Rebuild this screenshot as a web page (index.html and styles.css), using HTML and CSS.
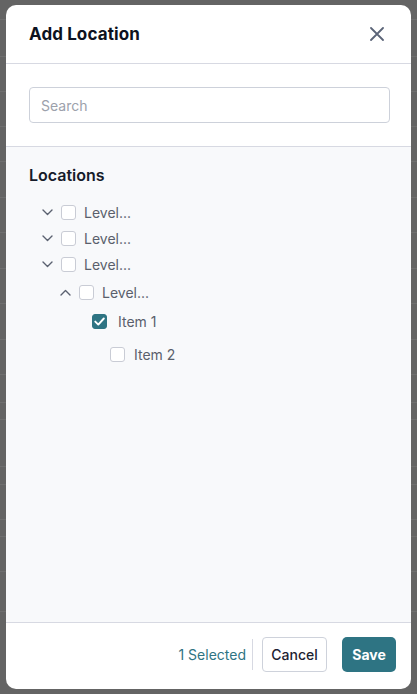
FILE: index.html
```html
<!DOCTYPE html>
<html lang="en">
<head>
<meta charset="utf-8">
<title>Add Location</title>
<link rel="stylesheet" href="styles.css">
</head>
<body>
<div class="backdrop">
  <div class="bg-row h20"></div>
  <div class="bg-row h37"></div>
  <div class="bg-row h35"></div>
  <div class="bg-row h35"></div>
  <div class="bg-row h35"></div>
  <div class="bg-row h36"></div>
  <div class="bg-row h35"></div>
  <div class="bg-row h36"></div>
  <div class="bg-row h35"></div>
  <div class="bg-row h36"></div>
  <div class="bg-row h35"></div>
  <div class="bg-row h28"></div>
  <div class="bg-row h17"></div>
  <div class="bg-row h47"></div>
  <div class="bg-row h18"></div>
  <div class="bg-row h35"></div>
  <div class="bg-row h17"></div>
  <div class="bg-row h35"></div>
  <div class="bg-row h40"></div>
</div>

<div class="modal">
  <header class="modal-header">
    <h1 class="modal-title">Add Location</h1>
    <button class="close-btn" aria-label="Close">
      <svg width="14" height="14" viewBox="0 0 14 14"><path d="M1 1L13 13M13 1L1 13" stroke="#5b6478" stroke-width="1.8" stroke-linecap="round" fill="none"/></svg>
    </button>
  </header>

  <div class="search-area">
    <input class="search-input" type="text" placeholder="Search">
  </div>

  <div class="modal-body">
    <h2 class="section-title">Locations</h2>
    <ul class="tree">
      <li class="row lvl1">
        <span class="chev"><svg width="11" height="7" viewBox="0 0 11 7"><path d="M1 1l4.5 4.5L10 1" stroke="#5b6170" stroke-width="1.4" fill="none" stroke-linecap="round" stroke-linejoin="round"/></svg></span>
        <span class="cb"></span><span class="label">Level...</span>
      </li>
      <li class="row lvl1">
        <span class="chev"><svg width="11" height="7" viewBox="0 0 11 7"><path d="M1 1l4.5 4.5L10 1" stroke="#5b6170" stroke-width="1.4" fill="none" stroke-linecap="round" stroke-linejoin="round"/></svg></span>
        <span class="cb"></span><span class="label">Level...</span>
      </li>
      <li class="row lvl1">
        <span class="chev"><svg width="11" height="7" viewBox="0 0 11 7"><path d="M1 1l4.5 4.5L10 1" stroke="#5b6170" stroke-width="1.4" fill="none" stroke-linecap="round" stroke-linejoin="round"/></svg></span>
        <span class="cb"></span><span class="label">Level...</span>
      </li>
      <li class="row lvl2 mt2">
        <span class="chev"><svg width="11" height="7" viewBox="0 0 11 7"><path d="M1 6l4.5-4.5L10 6" stroke="#5b6170" stroke-width="1.4" fill="none" stroke-linecap="round" stroke-linejoin="round"/></svg></span>
        <span class="cb"></span><span class="label">Level...</span>
      </li>
      <li class="row item1 mt3">
        <span class="cb checked"><svg width="11" height="9" viewBox="0 0 11 9"><path d="M1.3 4.6l3 3L9.8 1.5" stroke="#fff" stroke-width="1.9" fill="none" stroke-linecap="round" stroke-linejoin="round"/></svg></span>
        <span class="label">Item 1</span>
      </li>
      <li class="row item2 mt7">
        <span class="cb"></span>
        <span class="label">Item 2</span>
      </li>
    </ul>
  </div>

  <footer class="modal-footer">
    <span class="selected-count">1 Selected</span>
    <span class="vsep"></span>
    <button class="btn btn-cancel">Cancel</button>
    <button class="btn btn-save">Save</button>
  </footer>
</div>
</body>
</html>
```

FILE: styles.css
```css
* { box-sizing: border-box; }

html, body {
  margin: 0;
  padding: 0;
  width: 417px;
  height: 694px;
  overflow: hidden;
  background: #646464;
  font-family: "Inter", "Noto Sans", sans-serif;
}

.backdrop {
  display: flex;
  flex-direction: column;
}

.bg-row { border-bottom: 1px solid #6f6f6f; flex: none; }
.h17 { height: 17px; }
.h18 { height: 18px; }
.h20 { height: 20px; }
.h28 { height: 28px; }
.h35 { height: 35px; }
.h36 { height: 36px; }
.h37 { height: 37px; }
.h40 { height: 40px; }
.h47 { height: 47px; }

.modal {
  position: absolute;
  left: 6px;
  top: 5px;
  width: 405px;
  height: 684px;
  background: #ffffff;
  border-radius: 10px;
  overflow: hidden;
  display: flex;
  flex-direction: column;
}

.modal-header {
  height: 59px;
  flex: none;
  display: flex;
  align-items: center;
  justify-content: space-between;
  padding: 0 26px 0 23px;
  border-bottom: 1px solid #d7d9e2;
}

.modal-title {
  margin: 0;
  font-size: 17px;
  font-weight: 700;
  color: #0d1220;
  letter-spacing: 0.1px;
}

.close-btn {
  border: 0;
  background: none;
  padding: 0;
  width: 16px;
  height: 16px;
  display: flex;
  align-items: center;
  justify-content: center;
}

.search-area {
  flex: none;
  padding: 23px 21px 23px 23px;
  border-bottom: 1px solid #d7d9e2;
}

.search-input {
  display: block;
  width: 100%;
  height: 36px;
  border: 1px solid #cdd1da;
  border-radius: 4px;
  padding: 0 11px;
  font-family: inherit;
  font-size: 14px;
  color: #333;
  background: #fff;
  outline: none;
}
.search-input::placeholder { color: #9ca1ab; }

.modal-body {
  flex: 1;
  background: #f8f9fb;
  padding: 18px 23px 0 23px;
}

.section-title {
  margin: 0;
  font-size: 16px;
  line-height: 20px;
  font-weight: 600;
  color: #161b2a;
}

.tree {
  list-style: none;
  margin: 14px 0 0 0;
  padding: 0;
}

.row {
  height: 26px;
  display: flex;
  align-items: center;
}
.lvl1 { padding-left: 13px; }
.lvl2 { padding-left: 31px; }
.item1 { padding-left: 63px; }
.item2 { padding-left: 81px; }
.mt2 { margin-top: 2px; }
.mt3 { margin-top: 3px; }
.mt7 { margin-top: 7px; }

.chev {
  width: 13px;
  margin-right: 6px;
  display: flex;
  align-items: center;
  justify-content: flex-start;
}

.cb {
  width: 15px;
  height: 15px;
  border: 1px solid #c9ccd5;
  border-radius: 3px;
  background: #fff;
  flex: none;
  display: flex;
  align-items: center;
  justify-content: center;
}
.cb.checked {
  background: #2e7483;
  border-color: #2e7483;
}

.label {
  margin-left: 8px;
  font-size: 14px;
  color: #5a5f6c;
}
.item1 .label { margin-left: 11px; }
.item2 .label { margin-left: 9px; }

.modal-footer {
  height: 67px;
  flex: none;
  border-top: 1px solid #d7d9e2;
  display: flex;
  align-items: center;
  justify-content: flex-end;
  padding: 0 15px 4px 0;
}

.selected-count {
  font-size: 14px;
  color: #2f7483;
}

.vsep {
  width: 1px;
  height: 31px;
  background: #d7d9e2;
  margin: 0 9px 0 6px;
}

.btn {
  font-family: inherit;
  font-size: 14px;
  border-radius: 4px;
  cursor: pointer;
}

.btn-cancel {
  width: 65px;
  height: 35px;
  border: 1px solid #ced2db;
  background: #fff;
  color: #1c2231;
  font-weight: 500;
  margin-right: 15px;
}

.btn-save {
  width: 54px;
  height: 35px;
  border: 0;
  background: #2e7483;
  color: #fff;
  font-weight: 700;
  border-radius: 5px;
}
```
